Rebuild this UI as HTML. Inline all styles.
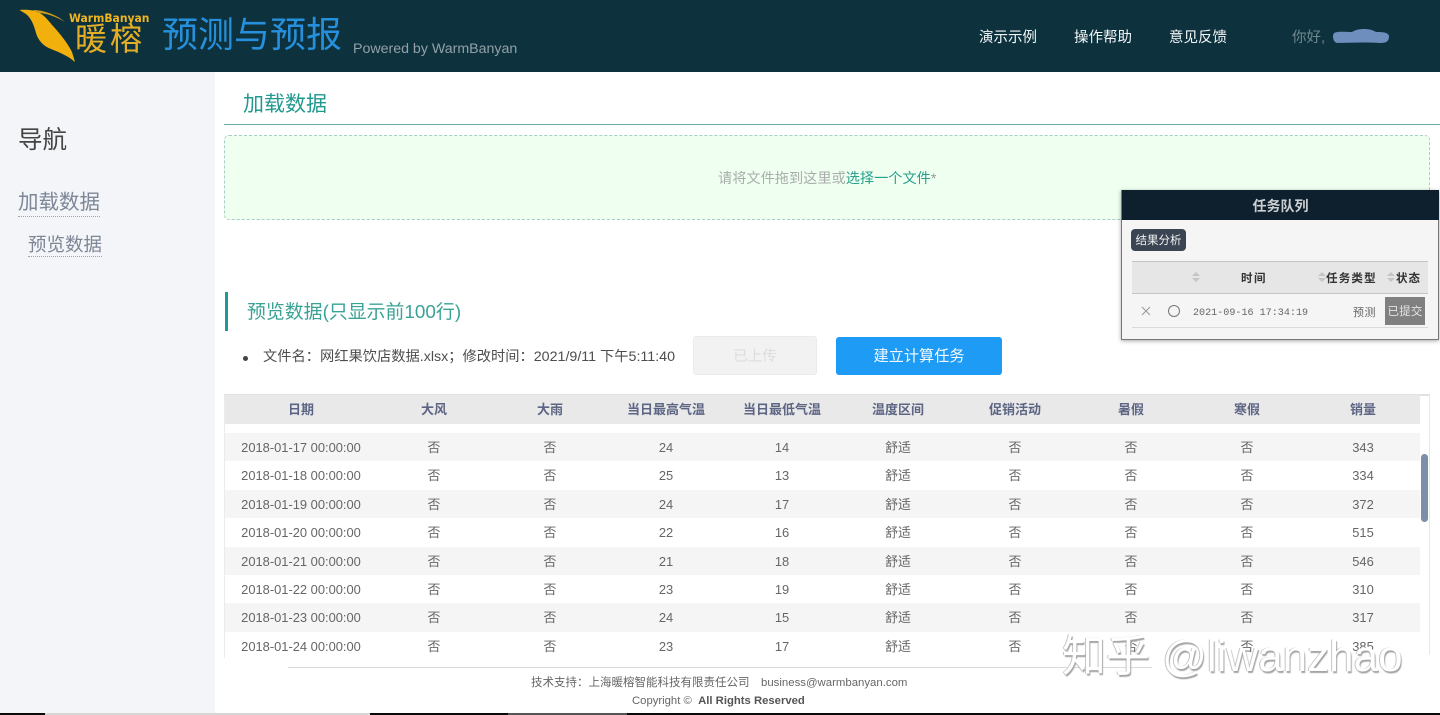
<!DOCTYPE html>
<html lang="zh-CN">
<head>
<meta charset="utf-8">
<title>预测与预报</title>
<style>
html,body{margin:0;padding:0;width:1440px;height:715px;overflow:hidden;background:#fff}
body{position:relative;font-family:"Liberation Sans","Noto Sans CJK SC",sans-serif;color:#606266}
.a{position:absolute;white-space:nowrap}
#top{left:0;top:0;width:1440px;height:72px;background:#0d323e}
#side{left:0;top:72px;width:215px;height:641px;background:#f3f5f8}
.c{position:absolute;transform:translateX(-50%);white-space:nowrap;text-align:center}
.row{position:absolute;left:225px;width:1195px;height:28.4px}
.row.g{background:#f5f5f5}
.row .c{top:6px;font-size:12.900px;line-height:18px;color:#666}
.hd .c{top:6px;font-size:13px;line-height:18px;font-weight:700;color:#5d6584}
.s{width:8px;height:11px}
.s:before,.s:after{content:"";position:absolute;left:0;border-left:4px solid transparent;border-right:4px solid transparent}
.s:before{top:0;border-bottom:4px solid #c4c4c4}
.s:after{top:6px;border-top:4px solid #c4c4c4}
</style>
</head>
<body>
<div class="a" id="top"></div>
<svg class="a" style="left:0;top:0" width="90" height="70" viewBox="0 0 90 70">
<path d="M19.500 10C24 9.500 29 9.800 33 10.500C42 12 47 19 53 26C62 36 68 44 72 52L75 62C68 56 60 52.500 51 49C43 46 38 40 36 33C34 25 31 18 26 14Z" fill="#f2b00c"/>
<path d="M33 10C44 10 57 15 65 22C57 17 46 13 38 13Z" fill="#c99a1c"/>
</svg>
<div class="a" style="left:69px;top:12px;font-size:11.600px;line-height:13px;font-weight:700;color:#f0b51e;font-family:'DejaVu Sans',sans-serif;transform:scaleX(.93);transform-origin:left">WarmBanyan</div>
<div class="a" style="left:75px;top:22px;font-size:32px;line-height:34px;color:#e4ae26;letter-spacing:3px">暖榕</div>
<div class="a" style="left:162px;top:12px;font-size:36px;line-height:46px;color:#2690dc">预测与预报</div>
<div class="a" style="left:353px;top:40px;font-size:14.200px;line-height:18px;color:#93a0a6">Powered by WarmBanyan</div>
<div class="a" style="left:979px;top:29px;font-size:14.500px;line-height:18px;color:#f2f6f6">演示示例</div>
<div class="a" style="left:1074px;top:29px;font-size:14.500px;line-height:18px;color:#f2f6f6">操作帮助</div>
<div class="a" style="left:1169px;top:29px;font-size:14.500px;line-height:18px;color:#f2f6f6">意见反馈</div>
<div class="a" style="left:1292px;top:29px;font-size:14.500px;line-height:18px;color:#71878e">你好,</div>
<svg class="a" style="left:1332px;top:27px" width="60" height="18" viewBox="0 0 60 18"><path d="M2 6C6 4 14 5 20 5C26 1 38 1 44 5C50 5 56 5 57 9C57 14 55 16 48 16C32 15 16 16 5 16C1 15 0 9 2 6Z" fill="#6e8fbe"/></svg>

<div class="a" id="side"></div>
<div class="a" style="left:18px;top:126px;font-size:24.500px;line-height:30px;color:#444">导航</div>
<div class="a" style="left:18px;top:190px;font-size:20.500px;line-height:26px;color:#7d8797;border-bottom:1px dotted #9aa3b0">加载数据</div>
<div class="a" style="left:28px;top:233px;font-size:18.500px;line-height:23px;color:#7d8797;border-bottom:1px dotted #9aa3b0">预览数据</div>

<div class="a" style="left:243px;top:92px;font-size:21px;line-height:26px;color:#22998f">加载数据</div>
<div class="a" style="left:224px;top:124px;width:1216px;height:1px;background:#68ada5"></div>
<div class="a" style="left:224px;top:135px;width:1204px;height:83px;background:#effff0;border:1px dashed #a9cdc7;border-radius:5px"></div>
<div class="a" style="left:718px;top:170px;font-size:14.200px;line-height:18px;color:#a9aeab">请将文件拖到这里或<span style="color:#29a08f">选择一个文件</span><span style="color:#999">*</span></div>

<div class="a" style="left:225px;top:292px;width:3px;height:39px;background:#1c9a94"></div>
<div class="a" style="left:247px;top:300px;font-size:18.900px;line-height:26px;color:#3aa396">预览数据(只显示前100行)</div>
<div class="a" style="left:243px;top:356px;width:5px;height:5px;border-radius:50%;background:#444"></div>
<div class="a" style="left:263px;top:348px;font-size:14.250px;line-height:19px;color:#4d4d4d">文件名：网红果饮店数据.xlsx；修改时间：2021/9/11 下午5:11:40</div>
<div class="a" style="left:693px;top:336px;width:122px;height:37px;background:#f2f2f2;border:1px solid #ebebeb;border-radius:3px;text-align:center;font-size:14.500px;line-height:40px;color:#dcdcdc">已上传</div>
<div class="a" style="left:836px;top:337px;width:166px;height:38px;background:#1e9bf4;border-radius:3px;text-align:center;font-size:15.200px;line-height:40px;color:#f4faff">建立计算任务</div>

<div class="a" style="left:224px;top:394px;width:1206px;height:264px;border-top:2px solid #e2e2e2;box-sizing:border-box;border-left:1px solid #ebebeb;border-right:1px solid #e6e6e6"></div>
<div class="row hd" style="top:395px;height:29px;background:#e9e9e9">
<span class="c" style="left:76px">日期</span><span class="c" style="left:209px">大风</span><span class="c" style="left:325px">大雨</span><span class="c" style="left:441px">当日最高气温</span><span class="c" style="left:557px">当日最低气温</span><span class="c" style="left:673px">温度区间</span><span class="c" style="left:790px">促销活动</span><span class="c" style="left:906px">暑假</span><span class="c" style="left:1022px">寒假</span><span class="c" style="left:1138px">销量</span>
</div>
<div class="row g" style="top:433px"><span class="c" style="left:76px">2018-01-17 00:00:00</span><span class="c" style="left:209px">否</span><span class="c" style="left:325px">否</span><span class="c" style="left:441px">24</span><span class="c" style="left:557px">14</span><span class="c" style="left:673px">舒适</span><span class="c" style="left:790px">否</span><span class="c" style="left:906px">否</span><span class="c" style="left:1022px">否</span><span class="c" style="left:1138px">343</span></div>
<div class="row" style="top:461.400px"><span class="c" style="left:76px">2018-01-18 00:00:00</span><span class="c" style="left:209px">否</span><span class="c" style="left:325px">否</span><span class="c" style="left:441px">25</span><span class="c" style="left:557px">13</span><span class="c" style="left:673px">舒适</span><span class="c" style="left:790px">否</span><span class="c" style="left:906px">否</span><span class="c" style="left:1022px">否</span><span class="c" style="left:1138px">334</span></div>
<div class="row g" style="top:489.800px"><span class="c" style="left:76px">2018-01-19 00:00:00</span><span class="c" style="left:209px">否</span><span class="c" style="left:325px">否</span><span class="c" style="left:441px">24</span><span class="c" style="left:557px">17</span><span class="c" style="left:673px">舒适</span><span class="c" style="left:790px">否</span><span class="c" style="left:906px">否</span><span class="c" style="left:1022px">否</span><span class="c" style="left:1138px">372</span></div>
<div class="row" style="top:518.200px"><span class="c" style="left:76px">2018-01-20 00:00:00</span><span class="c" style="left:209px">否</span><span class="c" style="left:325px">否</span><span class="c" style="left:441px">22</span><span class="c" style="left:557px">16</span><span class="c" style="left:673px">舒适</span><span class="c" style="left:790px">否</span><span class="c" style="left:906px">否</span><span class="c" style="left:1022px">否</span><span class="c" style="left:1138px">515</span></div>
<div class="row g" style="top:546.600px"><span class="c" style="left:76px">2018-01-21 00:00:00</span><span class="c" style="left:209px">否</span><span class="c" style="left:325px">否</span><span class="c" style="left:441px">21</span><span class="c" style="left:557px">18</span><span class="c" style="left:673px">舒适</span><span class="c" style="left:790px">否</span><span class="c" style="left:906px">否</span><span class="c" style="left:1022px">否</span><span class="c" style="left:1138px">546</span></div>
<div class="row" style="top:575px"><span class="c" style="left:76px">2018-01-22 00:00:00</span><span class="c" style="left:209px">否</span><span class="c" style="left:325px">否</span><span class="c" style="left:441px">23</span><span class="c" style="left:557px">19</span><span class="c" style="left:673px">舒适</span><span class="c" style="left:790px">否</span><span class="c" style="left:906px">否</span><span class="c" style="left:1022px">否</span><span class="c" style="left:1138px">310</span></div>
<div class="row g" style="top:603.400px"><span class="c" style="left:76px">2018-01-23 00:00:00</span><span class="c" style="left:209px">否</span><span class="c" style="left:325px">否</span><span class="c" style="left:441px">24</span><span class="c" style="left:557px">15</span><span class="c" style="left:673px">舒适</span><span class="c" style="left:790px">否</span><span class="c" style="left:906px">否</span><span class="c" style="left:1022px">否</span><span class="c" style="left:1138px">317</span></div>
<div class="row" style="top:631.800px"><span class="c" style="left:76px">2018-01-24 00:00:00</span><span class="c" style="left:209px">否</span><span class="c" style="left:325px">否</span><span class="c" style="left:441px">23</span><span class="c" style="left:557px">17</span><span class="c" style="left:673px">舒适</span><span class="c" style="left:790px">否</span><span class="c" style="left:906px">否</span><span class="c" style="left:1022px">否</span><span class="c" style="left:1138px">385</span></div>
<div class="a" style="left:1421px;top:454px;width:7px;height:68px;border-radius:4px;background:#7d8fa8"></div>

<div class="a" style="left:225px;top:655px;width:1205px;height:12px;background:#fff"></div>
<div class="a" style="left:288px;top:667px;width:864px;height:1px;background:#d9dcdc"></div>
<div class="a" style="left:531px;top:676px;font-size:11.500px;line-height:15px;color:#666">技术支持：上海暖榕智能科技有限责任公司</div>
<div class="a" style="left:761px;top:676px;font-size:11.400px;line-height:15px;color:#666">business@warmbanyan.com</div>
<div class="a" style="left:632px;top:694px;font-size:11.300px;line-height:15px;color:#666">Copyright ©&nbsp; <b style="color:#555">All Rights Reserved</b></div>

<div class="a" style="left:1062px;top:631px;font-size:44px;line-height:52px;color:#fff;text-shadow:1px 2px 1px #a5a5a5,-1px 0 0 #c4c4c4">知乎 @liwanzhao</div>

<div class="a" style="left:1121px;top:190px;width:318px;height:150px;background:#f5f5f5;border:1px solid #777;border-top:0;box-sizing:border-box;box-shadow:0 1px 4px rgba(0,0,0,.35)"></div>
<div class="a" style="left:1122px;top:190px;width:317px;height:30px;background:#0e1f2d;text-align:center;font-size:14px;line-height:32px;font-weight:700;color:#ccd0d3">任务队列</div>
<div class="a" style="left:1131px;top:229px;width:55px;height:22px;background:#3b4453;border-radius:4px;text-align:center;font-size:11.500px;line-height:24px;color:#f2f2f2">结果分析</div>
<div class="a" style="left:1132px;top:261px;width:296px;height:33px;background:#e6e6e6;border-top:1px solid #c4c4c4;border-bottom:1px solid #c4c4c4;box-sizing:border-box"></div>
<div class="a s" style="left:1192px;top:272px"></div>
<div class="a s" style="left:1318px;top:272px"></div>
<div class="a s" style="left:1387px;top:272px"></div>
<div class="a" style="left:1241px;top:272px;font-size:11.500px;line-height:15px;font-weight:700;color:#333;letter-spacing:1.500px">时间</div>
<div class="a" style="left:1326px;top:272px;font-size:11.500px;line-height:15px;font-weight:700;color:#333;letter-spacing:1.200px">任务类型</div>
<div class="a" style="left:1396px;top:272px;font-size:11.500px;line-height:15px;font-weight:700;color:#333;letter-spacing:1px">状态</div>
<svg class="a" style="left:1141px;top:306px" width="10" height="10" viewBox="0 0 10 10"><path d="M1 1L9 9M9 1L1 9" stroke="#999" stroke-width="1" fill="none"/></svg>
<div class="a" style="left:1168px;top:305px;width:10px;height:10px;border:1px solid #777;border-radius:50%"></div>
<div class="a" style="left:1193px;top:307px;font-family:'Liberation Mono','DejaVu Sans Mono',monospace;font-size:10.100px;line-height:14px;color:#666">2021-09-16 17:34:19</div>
<div class="a" style="left:1353px;top:306px;font-size:11px;line-height:15px;color:#666;letter-spacing:.5px">预测</div>
<div class="a" style="left:1385px;top:297px;width:40px;height:28px;background:#808080;text-align:center;font-size:11.500px;line-height:31px;color:#e4e4e4;letter-spacing:.2px">已提交</div>
<div class="a" style="left:1132px;top:327px;width:296px;height:1px;background:#d9d9d9"></div>

<div class="a" style="left:0;top:713px;width:1440px;height:2px;background:#0a0a0a"></div>
<div class="a" style="left:45px;top:713px;width:325px;height:2px;background:#d6d6d6"></div>
<div class="a" style="left:508px;top:713px;width:119px;height:2px;background:#555"></div>
</body>
</html>
